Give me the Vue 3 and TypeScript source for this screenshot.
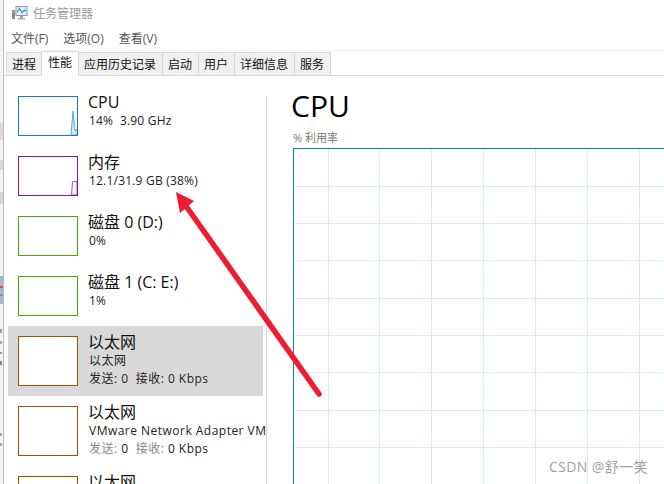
<script setup lang="ts">
interface Row { title: string; line?: string; stat?: boolean; kind: string; tall?: boolean; active?: boolean; muted?: boolean }

const menus = ['文件(F)', '选项(O)', '查看(V)']
const tabs = ['进程', '性能', '应用历史记录', '启动', '用户', '详细信息', '服务']
const rows: Row[] = [
  { title: 'CPU', line: '14%  3.90 GHz', kind: 'cpu' },
  { title: '内存', line: '12.1/31.9 GB (38%)', kind: 'mem' },
  { title: '磁盘 0 (D:)', line: '0%', kind: 'disk' },
  { title: '磁盘 1 (C: E:)', line: '1%', kind: 'disk' },
  { title: '以太网', line: '以太网', stat: true, kind: 'net', tall: true, active: true },
  { title: '以太网', line: 'VMware Network Adapter VM', stat: true, kind: 'net', tall: true, muted: true },
  { title: '以太网', kind: 'net', tall: true },
]
const vLines = [34, 85, 137, 189, 241, 293, 345]
const hLines = [37, 74, 111, 149, 186, 223, 261, 298]
</script>

<template>
  <div class="screen">
    <div class="edge">
      <svg width="3" height="484" class="edge-svg">
        <rect x="0" y="122" width="3" height="18" fill="#e3d6d4" />
        <rect x="0" y="160" width="3" height="10" fill="#d6d9dc" />
        <rect x="0" y="192" width="3" height="12" fill="#d2d6da" />
        <rect x="0" y="276" width="3" height="28" fill="#a9b9cb" />
        <rect x="0" y="286" width="3" height="2" fill="#d9525a" />
        <rect x="0" y="294" width="3" height="2" fill="#8a8f9a" />
        <rect x="0" y="329" width="2" height="4" fill="#999" />
        <rect x="0" y="341" width="2" height="3" fill="#aaa" />
        <rect x="0" y="352" width="2" height="2" fill="#999" />
        <rect x="0" y="361" width="2" height="4" fill="#888" />
        <rect x="0" y="433" width="2" height="3" fill="#aaa" />
        <rect x="0" y="443" width="2" height="3" fill="#aaa" />
      </svg>
    </div>
    <div class="window">
      <div class="titlebar">
        <svg class="app-icon" width="16" height="16" viewBox="0 0 16 16">
          <rect x="0" y="5" width="3" height="9" fill="#7f9080" />
          <rect x="0.5" y="6" width="2" height="1.5" fill="#9fc46a" />
          <rect x="3.5" y="1" width="12" height="10" fill="#8d9aa3" />
          <rect x="4.5" y="2" width="10" height="8" fill="#dff1fb" />
          <path d="M5 7 L7.5 3.5 L10 7.5 L12.5 5 L14 6.5" fill="none" stroke="#2f8fd0" stroke-width="1.1" />
          <rect x="8" y="11" width="3" height="2" fill="#9aa3a8" />
          <rect x="6" y="13" width="7" height="1.5" fill="#a9b0b4" />
        </svg>
        <span class="title-text">任务管理器</span>
      </div>
      <div class="menubar">
        <span v-for="m in menus" :key="m" class="menu">{{ m }}</span>
      </div>
      <div class="tabs">
        <span v-for="t in tabs" :key="t" class="tab" :class="{ current: t === '性能' }">{{ t }}</span>
      </div>
      <div class="body">
        <div class="list">
          <div v-for="(r, i) in rows" :key="i" class="row" :class="{ active: r.active, tall: r.tall }">
            <div class="thumb" :class="r.kind">
              <svg v-if="r.kind === 'cpu'" class="spark" width="58" height="38" viewBox="0 0 58 38">
                <path d="M52 38 L54 14 L56 34 L58 32 L58 38 Z" fill="#d5e9f5" stroke="#5aa6d2" stroke-width="1" />
              </svg>
              <svg v-if="r.kind === 'mem'" class="spark" width="58" height="38" viewBox="0 0 58 38">
                <path d="M52.5 38 L53.5 24.5 L58 24.5 L58 38 Z" fill="#f4f2f6" stroke="#a85cc4" stroke-width="1" />
              </svg>
            </div>
            <div class="info">
              <div class="name">{{ r.title }}</div>
              <div v-if="r.line" class="sub">{{ r.line }}</div>
              <div v-if="r.stat" class="sub" :class="{ muted: r.muted }"><span class="lbl">发送:</span> 0&nbsp; <span class="lbl">接收:</span> 0 Kbps</div>
            </div>
          </div>
        </div>
        <div class="divider"></div>
        <div class="main">
          <div class="heading">CPU</div>
          <div class="caption">% 利用率</div>
          <div class="graph">
            <svg width="372" height="336" class="grid">
              <line v-for="x in vLines" :key="'v' + x" :x1="x + 0.5" :x2="x + 0.5" y1="0" y2="336" />
              <line v-for="y in hLines" :key="'h' + y" :y1="y + 0.5" :y2="y + 0.5" x1="0" x2="372" />
            </svg>
          </div>
        </div>
      </div>
    </div>
    <svg class="arrow" width="664" height="484" viewBox="0 0 664 484">
      <path d="M319 394 L186 206" fill="none" stroke="#ee1c2e" stroke-width="5.5" stroke-linecap="round" />
      <path d="M176 192 L194 201 L180 213 Z" fill="#ee1c2e" />
    </svg>
    <div class="mark">CSDN @舒一笑</div>
  </div>
</template>

<style scoped>
.screen {
  position: relative;
  display: flex;
  width: 664px;
  height: 484px;
  overflow: hidden;
  background: #fff;
  font-family: "Open Sans", "Noto Sans CJK SC", sans-serif;
  color: #1a1a1a;
}
.edge {
  width: 3px;
  flex: none;
  background: #f4f4f4;
  border-right: 1px solid #bcbcbc;
}
.edge-svg { display: block; }
.window {
  flex: 1;
  min-width: 0;
  display: flex;
  flex-direction: column;
}
.titlebar {
  height: 26px;
  display: flex;
  align-items: center;
  padding-left: 8px;
  flex: none;
}
.app-icon { display: block; }
.title-text {
  margin-left: 5px;
  font-size: 12px;
  color: #9a9a9a;
}
.menubar {
  height: 24px;
  display: flex;
  align-items: center;
  padding-left: 7px;
  gap: 15px;
  font-size: 12px;
  color: #555;
  flex: none;
}
.tabs {
  height: 25px;
  display: flex;
  align-items: flex-end;
  padding-left: 2px;
  border-bottom: 1px solid #d9d9d9;
  flex: none;
  background: #fff;
  box-shadow: inset 0 1px 0 #f3f3f3;
}
.tab {
  height: 22px;
  line-height: 23px;
  padding: 0 6px 0 5px;
  font-size: 12px;
  color: #111;
  background: #f0f0f0;
  border: 1px solid #d9d9d9;
  border-bottom: none;
  border-left: none;
  white-space: nowrap;
}
.tab:first-child {
  border-left: 1px solid #d9d9d9;
  padding: 0 5px;
}
.tab.current {
  height: 24px;
  line-height: 22px;
  margin-bottom: -1px;
  background: #fff;
  border-left: 1px solid #d9d9d9;
  margin-left: -1px;
  padding: 0 6px;
  position: relative;
}
.body {
  flex: 1;
  min-height: 0;
  display: flex;
}
.list {
  width: 262px;
  flex: none;
  overflow: hidden;
  padding-top: 10px;
}
.row {
  display: flex;
  height: 60px;
  box-sizing: border-box;
  margin: 0 3px 0 4px;
  padding: 10px 0 10px 10px;
  white-space: nowrap;
}
.row.tall { height: 70px; }
.row.active { background: #d9d9d9; }
.thumb {
  position: relative;
  width: 60px;
  height: 40px;
  box-sizing: border-box;
  flex: none;
  background: #fff;
  border: 1px solid #000;
}
.tall .thumb { height: 50px; }
.thumb.cpu { border-color: #117dbb; }
.thumb.mem { border-color: #8b12ae; }
.thumb.disk { border-color: #4da60c; }
.thumb.net { border-color: #a74f01; }
.spark { position: absolute; left: 0; top: 0; display: block; }
.info {
  margin-left: 11px;
  margin-top: -4px;
}
.name {
  margin-left: -1px;
  font-size: 16px;
  line-height: 20px;
  color: #111;
}
.sub {
  font-size: 12px;
  line-height: 17.5px;
  letter-spacing: 0.2px;
  color: #222;
  white-space: pre;
}
.tall .sub { letter-spacing: 0.48px; }
.sub.muted .lbl { color: #888; }
.divider {
  width: 1px;
  flex: none;
  margin-top: 20px;
  background: #d6d6d6;
}
.main {
  flex: 1;
  min-width: 0;
  padding-left: 24px;
  overflow: hidden;
}
.heading {
  margin-top: 12px;
  font-size: 30px;
  line-height: 36px;
  color: #000;
}
.caption {
  margin: 5px 0 0 2px;
  height: 19px;
  line-height: 17px;
  font-size: 11px;
  color: #777;
}
.graph {
  margin-left: 2px;
  width: 372px;
  height: 340px;
  border: 1px solid #117dbb;
  border-right: none;
  background: #fff;
}
.grid { display: block; }
.grid line { stroke: #d9eaf4; stroke-width: 1; }
.arrow {
  position: absolute;
  left: 0;
  top: 0;
  pointer-events: none;
}
.mark {
  position: absolute;
  left: 549px;
  top: 458px;
  font-size: 14px;
  letter-spacing: 0.4px;
  line-height: 18px;
  color: #a0a0a0;
  white-space: nowrap;
}
</style>
